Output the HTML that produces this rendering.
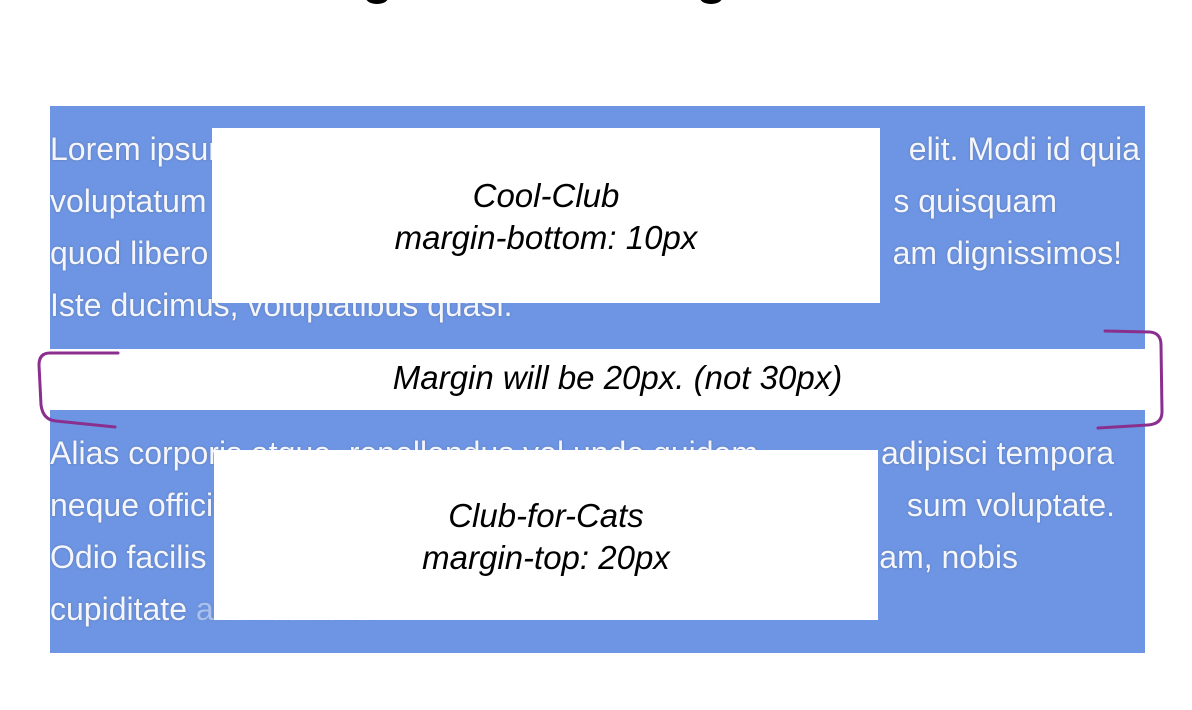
<!DOCTYPE html>
<html><head><meta charset="utf-8"><style>
body{margin:0;width:1192px;height:710px;background:#fff;position:relative;overflow:hidden;font-family:"Liberation Sans",sans-serif}
.blue{position:absolute;left:50px;width:1095px;background:#6d95e3}
.l,.r{position:absolute;color:#f4f6fb;font-size:32px;white-space:nowrap;text-shadow:0 0 2px rgba(80,90,120,.5)}
.l{left:50px}
.r{right:52px;text-align:right}
.wb{position:absolute;background:#fff}
.it{position:absolute;font-style:italic;font-size:33px;color:#000;text-align:center;line-height:42px}
</style></head><body>
<div style="position:absolute;left:366px;top:-8px;width:22px;height:12px;border-radius:50%;background:#000"></div>
<div style="position:absolute;left:700px;top:-8px;width:22px;height:12px;border-radius:50%;background:#000"></div>
<div class="blue" style="top:106px;height:243px"></div>
<div class="blue" style="top:410px;height:243px"></div>
<div class="l" style="top:131px">Lorem ipsum dolor sit amet</div>
<div class="r" style="top:131px">elit. Modi id quia</div>
<div class="l" style="top:183px">voluptatum quasi a ducimus</div>
<div class="r" style="top:183px;right:135px">s quisquam</div>
<div class="l" style="top:235px">quod libero reiciendis</div>
<div class="r" style="top:235px;right:70px">am dignissimos!</div>
<div class="l" style="top:287px">Iste ducimus, voluptatibus quasi.</div>
<div class="l" style="top:435px">Alias corporis atque, repellendus vel unde quidem</div>
<div class="r" style="top:435px;right:78px">adipisci tempora</div>
<div class="l" style="top:487px">neque officiis</div>
<div class="r" style="top:487px;right:77px">sum voluptate.</div>
<div class="l" style="top:539px">Odio facilis numquam</div>
<div class="r" style="top:539px;right:174px">am, nobis</div>
<div class="l" style="top:591px">cupiditate <span style="opacity:.45">aut nesciunt.</span></div>
<div class="wb" style="left:212px;top:128px;width:668px;height:175px"></div>
<div class="wb" style="left:214px;top:450px;width:664px;height:170px"></div>
<div class="it" style="left:212px;top:175px;width:668px">Cool-Club<br>margin-bottom: 10px</div>
<div class="it" style="left:214px;top:495px;width:664px">Club-for-Cats<br>margin-top: 20px</div>
<div class="it" style="left:70px;top:357px;width:1095px">Margin will be 20px. (not 30px)</div>
<svg width="1192" height="710" style="position:absolute;left:0;top:0">
<path d="M118 353 L50 353 Q39 353 39 365 L41 405 Q43 420 56 421 L115 427" fill="none" stroke="#8b2f8f" stroke-width="3" stroke-linecap="round"/>
<path d="M1105 331 L1150 332 Q1161 333 1161 345 L1162 412 Q1162 424 1148 425 L1098 428" fill="none" stroke="#8b2f8f" stroke-width="3" stroke-linecap="round"/>
</svg>
</body></html>
